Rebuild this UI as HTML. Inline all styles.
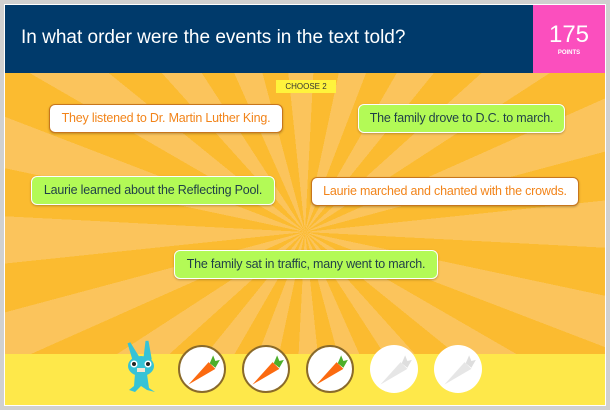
<!DOCTYPE html>
<html><head><style>
*{margin:0;padding:0;box-sizing:border-box}
body{width:610px;height:410px;background:#fff;position:relative;overflow:hidden;font-family:"Liberation Sans",sans-serif}
.frame{position:absolute;left:0;top:0;width:610px;height:410px;border:4px solid #d0d0d0;background:#fff}
.stage{position:absolute;left:5px;top:5px;width:600px;height:400px;overflow:hidden;
background:repeating-conic-gradient(from 3deg at 300px 227px,#fbbb30 0deg 9deg,#fbc45c 9deg 18deg);}
.head{position:absolute;left:0;top:0;width:528px;height:68px;background:#003a6b;color:#fff;font-size:19px;line-height:66px;padding-left:16px}
.pts{position:absolute;left:528px;top:0;width:72px;height:68px;background:#fb4fbe;color:#fff;text-align:center}
.pts .n{font-size:24px;margin-top:17px;line-height:26px;font-weight:300}
.pts .l{font-size:6px;font-weight:bold;margin-top:2px}
.choose{position:absolute;left:271px;top:75px;width:60px;height:13px;background:#fff33c;font-size:8px;line-height:13px;text-align:center;color:#333}
.b{position:absolute;height:29px;border-radius:6px;font-size:12.5px;line-height:26px;text-align:center;box-shadow:0 1px 2px rgba(0,0,0,.25);letter-spacing:-0.2px}
.w{background:#fff;border:1.5px solid #c8761c;color:#f2841a}
.g{background:#b3fa56;border:1.5px solid #fff;color:#1f3f48}
.band{position:absolute;left:0;top:349px;width:600px;height:51px;background:#fee84a}
.c{position:absolute;top:340px;width:48px;height:48px;border-radius:50%;background:#fff;border:2px solid #8a6a2a}
.c.e{border:none}
.c svg{position:absolute;left:5px;top:5px}
.c.e svg{left:7px;top:7px}
</style></head><body>
<div class="frame"></div>
<div class="stage">
<div class="head">In what order were the events in the text told?</div>
<div class="pts"><div class="n">175</div><div class="l">POINTS</div></div>
<div class="choose">CHOOSE 2</div>
<div class="b w" style="left:44px;top:99px;width:234px">They listened to Dr. Martin Luther King.</div>
<div class="b g" style="left:353px;top:99px;width:207px">The family drove to D.C. to march.</div>
<div class="b g" style="left:26px;top:171px;width:244px">Laurie learned about the Reflecting Pool.</div>
<div class="b w" style="left:306px;top:172px;width:268px">Laurie marched and chanted with the crowds.</div>
<div class="b g" style="left:169px;top:245px;width:264px">The family sat in traffic, many went to march.</div>
<div class="band"></div>
<svg style="position:absolute;left:120px;top:335px" width="34" height="60" viewBox="0 0 34 60">
<path d="M9 20 L4 3 L12 16 Z M20 18 L22 1 L25 18 Z" fill="#36c3d6" stroke="#36c3d6" stroke-width="3"/>
<ellipse cx="16" cy="26" rx="13" ry="10" fill="#36c3d6"/>
<circle cx="9" cy="24" r="3.5" fill="#fff"/><circle cx="23" cy="24" r="3.5" fill="#fff"/>
<circle cx="9" cy="24" r="2" fill="#222"/><circle cx="23" cy="24" r="2" fill="#222"/>
<rect x="12" y="28" width="8" height="4" fill="#f3e6d0"/>
<path d="M10 34 L22 34 L24 48 L30 52 L22 50 L16 46 L10 52 L4 50 L9 46 Z" fill="#36c3d6"/>
</svg>
<div class="c" style="left:173px"><svg width="36" height="36" viewBox="0 0 32 32"><path d="M3 29 L21 9 L27 15 Z" fill="#fb6a10"/><path d="M22 10 L25 3 L27 8 L31 7 L27 14 Z" fill="#4caf2a"/></svg></div>
<div class="c" style="left:237px"><svg width="36" height="36" viewBox="0 0 32 32"><path d="M3 29 L21 9 L27 15 Z" fill="#fb6a10"/><path d="M22 10 L25 3 L27 8 L31 7 L27 14 Z" fill="#4caf2a"/></svg></div>
<div class="c" style="left:301px"><svg width="36" height="36" viewBox="0 0 32 32"><path d="M3 29 L21 9 L27 15 Z" fill="#fb6a10"/><path d="M22 10 L25 3 L27 8 L31 7 L27 14 Z" fill="#4caf2a"/></svg></div>
<div class="c e" style="left:365px"><svg width="36" height="36" viewBox="0 0 32 32"><path d="M3 29 L21 9 L27 15 Z" fill="#e6e6e6"/><path d="M22 10 L25 3 L27 8 L31 7 L27 14 Z" fill="#dedede"/></svg></div>
<div class="c e" style="left:429px"><svg width="36" height="36" viewBox="0 0 32 32"><path d="M3 29 L21 9 L27 15 Z" fill="#e6e6e6"/><path d="M22 10 L25 3 L27 8 L31 7 L27 14 Z" fill="#dedede"/></svg></div>
</div>
</body></html>
